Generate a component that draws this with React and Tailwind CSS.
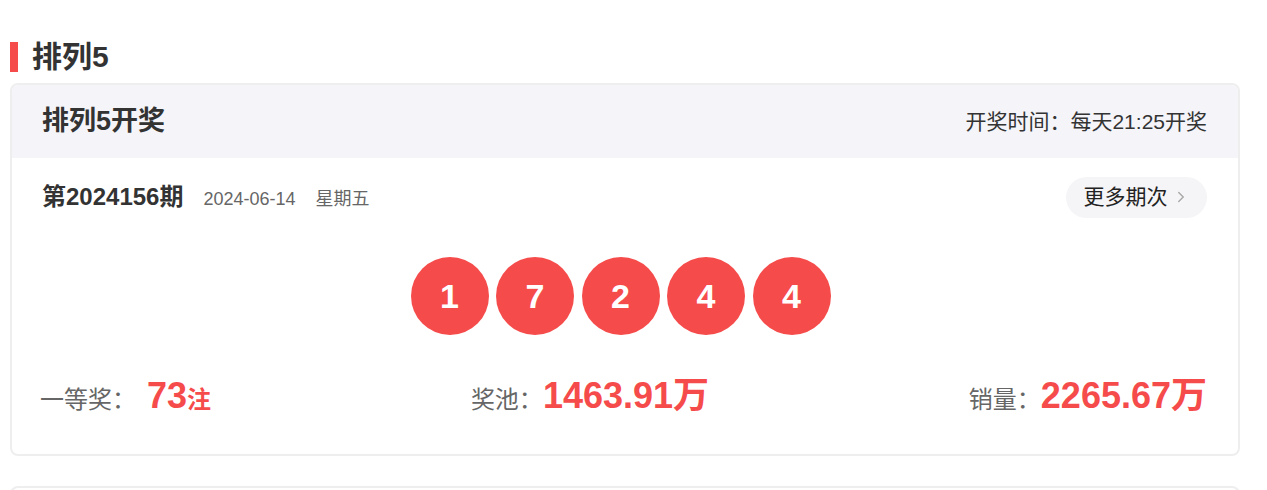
import React from "react";
import { ChevronRight } from "lucide-react";

const balls = [1, 7, 2, 4, 4];

const App = () => {
  return (
    <div
      className="w-[1267px] h-[490px] bg-white overflow-hidden pt-[42px] pl-[10px] pr-[27px]"
      style={{ fontFamily: '"Liberation Sans", "Noto Sans CJK SC", sans-serif' }}
    >
      {/* Section title */}
      <div className="flex items-center h-[30px]">
        <div className="w-[8px] h-[30px] bg-[#f64b4b]" />
        <h1 className="ml-[14px] text-[30px] font-bold text-[#333] leading-none">排列5</h1>
      </div>

      {/* Draw card */}
      <div className="mt-[11px] border-2 border-[#eeeeee] rounded-[8px] overflow-hidden">
        <div className="h-[73px] bg-[#f5f5f9] flex items-center justify-between pl-[30px] pr-[31px]">
          <h2 className="text-[27px] font-bold text-[#333]">排列5开奖</h2>
          <span className="text-[21px] text-[#333]">开奖时间：每天21:25开奖</span>
        </div>

        <div className="pl-[30px] pr-[31px] pt-[18px] pb-[34px]">
          <div className="flex items-center justify-between h-[42px]">
            <div className="flex items-baseline">
              <span className="text-[24px] font-bold text-[#333]">第2024156期</span>
              <span className="ml-[20px] text-[18px] text-[#666]">2024-06-14</span>
              <span className="ml-[20px] text-[18px] text-[#666]">星期五</span>
            </div>
            <button className="h-[41px] w-[141px] rounded-full bg-[#f5f5f7] flex items-center justify-center text-[21px] text-[#222]">
              更多期次
              <ChevronRight className="w-[18px] h-[18px] ml-[4px] text-[#aaa]" strokeWidth={2} />
            </button>
          </div>

          <div className="flex justify-center gap-[7.5px] mt-[39px] pr-[8px]">
            {balls.map((n, i) => (
              <div
                key={i}
                className="w-[78px] h-[78px] rounded-full bg-[#f64b4b] flex items-center justify-center text-white text-[34px] font-bold"
              >
                {n}
              </div>
            ))}
          </div>

          <div className="flex justify-between items-baseline mt-[43px] -ml-[2px] h-[42px]">
            <div className="flex items-baseline">
              <span className="text-[24px] text-[#666]">一等奖：</span>
              <span className="ml-[11px] text-[36px] font-bold text-[#f64b4b] leading-none">73</span>
              <span className="text-[24px] font-bold text-[#f64b4b]">注</span>
            </div>
            <div className="flex items-baseline">
              <span className="text-[24px] text-[#666]">奖池：</span>
              <span className="text-[36px] font-bold text-[#f64b4b] leading-none">1463.91万</span>
            </div>
            <div className="flex items-baseline">
              <span className="text-[24px] text-[#666]">销量：</span>
              <span className="text-[36px] font-bold text-[#f64b4b] leading-none">2265.67万</span>
            </div>
          </div>
        </div>
      </div>

      {/* Next card peeking */}
      <div className="mt-[30px] h-[40px] border-2 border-[#eeeeee] rounded-[8px]" />
    </div>
  );
};

export default App;
